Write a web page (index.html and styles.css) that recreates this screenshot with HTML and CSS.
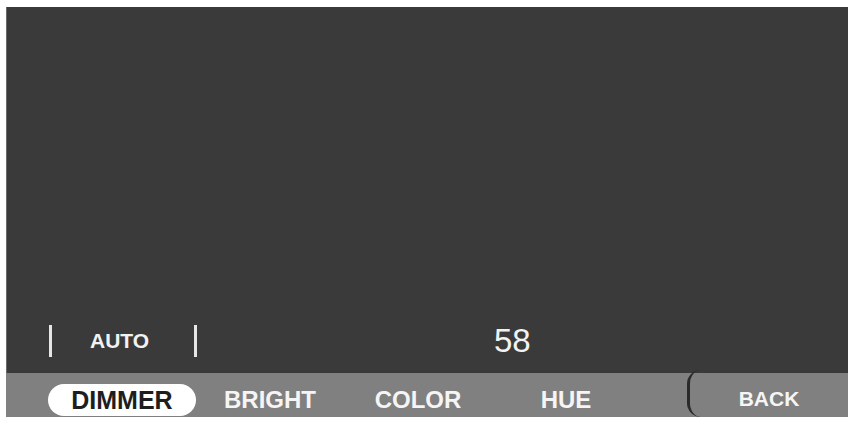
FILE: index.html
```html
<!DOCTYPE html>
<html lang="en">
<head>
    <meta charset="UTF-8">
    <meta name="viewport" content="width=device-width, initial-scale=1.0">
    <title>Dimmer</title>
    <link rel="stylesheet" href="styles.css">
</head>
<body>
    <div class="screen">
        <!-- Main display area -->
        <div class="display">
            <div class="status-row">
                <div class="mode">
                    <span class="divider"></span>
                    <span class="mode-label">AUTO</span>
                    <span class="divider"></span>
                </div>
                <div class="value">58</div>
            </div>
        </div>

        <!-- Tab bar -->
        <div class="tab-bar">
            <button class="tab active">DIMMER</button>
            <button class="tab">BRIGHT</button>
            <button class="tab">COLOR</button>
            <button class="tab">HUE</button>
            <button class="back-btn">BACK</button>
        </div>
    </div>
</body>
</html>
```

FILE: styles.css
```css
body {
    margin: 0;
    background-color: #ffffff;
    font-family: "Liberation Sans", Arial, sans-serif;
}

.screen {
    width: 842px;
    margin: 7px 0 0 6px;
}

.display {
    height: 366px;
    background-color: #3a3a3a;
    border-left: 1px solid #6a6a6a;
    box-sizing: border-box;
    display: flex;
    flex-direction: column;
    justify-content: flex-end;
    padding-bottom: 14px;
}

.status-row {
    display: flex;
    align-items: center;
    height: 36px;
}

.mode {
    display: flex;
    align-items: center;
    width: 148px;
    margin-left: 42px;
}

.divider {
    width: 3px;
    height: 32px;
    background-color: #e6e6e6;
}

.mode-label {
    width: 142px;
    padding-left: 38px;
    box-sizing: border-box;
    color: #f2f2f2;
    font-size: 21px;
    font-weight: bold;
}

.value {
    color: #f2f2f2;
    font-size: 33px;
    margin-left: 297px;
}

.tab-bar {
    display: flex;
    align-items: flex-end;
    height: 44px;
    padding: 0 0 1px 42px;
    box-sizing: border-box;
    background-color: #808080;
}

button {
    font-family: "Liberation Sans", Arial, sans-serif;
    font-weight: bold;
    border: none;
    cursor: pointer;
}

.tab {
    width: 148px;
    height: 32px;
    padding: 0;
    background: none;
    color: #f5f5f5;
    font-size: 24px;
    border-radius: 16px;
}

.tab.active {
    background-color: #ffffff;
    color: #1e1e1e;
    font-size: 25px;
}

.back-btn {
    margin-left: auto;
    margin-top: -3px;
    align-self: stretch;
    width: 161px;
    height: 47px;
    margin-bottom: -1px;
    padding: 10px 0 0 0;
    background: none;
    color: #f5f5f5;
    font-size: 21px;
    border-left: 3px solid #2a2a2a;
    border-radius: 14px 0 0 14px;
}
```
